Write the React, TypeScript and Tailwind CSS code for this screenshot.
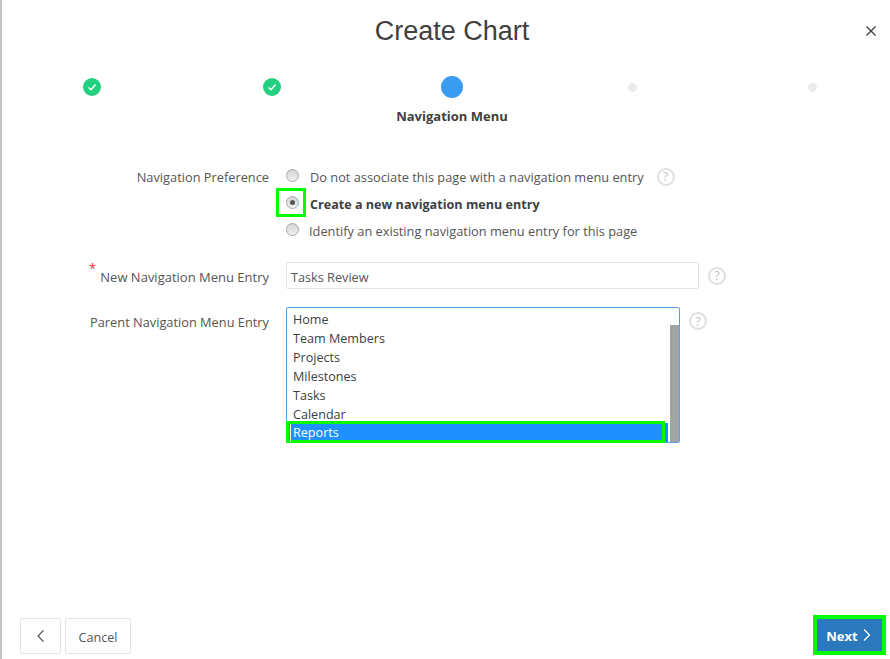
import React from "react";

const sans = "font-['Open_Sans','Noto_Sans',sans-serif]";

function Help({ className = "" }: { className?: string }) {
  return (
    <span className={"flex h-[18px] w-[18px] shrink-0 items-center justify-center rounded-full border-2 border-[#e0e0e0] text-[13px] leading-none text-[#c8c8c8] " + className}>?</span>
  );
}

function Radio({ checked = false }: { checked?: boolean }) {
  return (
    <span className="flex h-[13px] w-[13px] shrink-0 items-center justify-center rounded-full border border-[#a9a9a9] bg-gradient-to-b from-[#d4d4d4] to-[#f0f0f0]">
      {checked && <span className="h-[5px] w-[5px] rounded-full bg-[#555]" />}
    </span>
  );
}

function Done() {
  return (
    <span className="flex h-[18px] w-[18px] items-center justify-center rounded-full bg-[#22d07f]">
      <svg width="12" height="12" viewBox="0 0 12 12" fill="none" stroke="white" strokeWidth="1.5"><path d="M2.5 6.5 5 8.7 9.6 3.4" /></svg>
    </span>
  );
}

const items = ["Home", "Team Members", "Projects", "Milestones", "Tasks", "Calendar"];

export default function App() {
  return (
    <div className={"relative flex h-[659px] w-[890px] flex-col overflow-hidden border-l-2 border-[#c4c4c4] bg-white text-[#404040] " + sans}>
      <button className="absolute right-[12px] top-[24px] text-[#404040]">
        <svg width="14" height="14" viewBox="0 0 14 14" fill="none" stroke="currentColor" strokeWidth="1.4"><path d="M2.5 2.5l9 9M11.5 2.5l-9 9" /></svg>
      </button>

      <div className="w-[900px] shrink-0">
        <h1 className="pt-[15px] text-center font-['Liberation_Sans',sans-serif] text-[27px] leading-[32px] text-[#404040]">Create Chart</h1>
        <div className="mt-[29px] grid grid-cols-5">
          <div className="flex h-[22px] items-center justify-center"><Done /></div>
          <div className="flex h-[22px] items-center justify-center"><Done /></div>
          <div className="flex h-[22px] items-center justify-center"><span className="h-[22px] w-[22px] rounded-full bg-[#3a9bf0]" /></div>
          <div className="flex h-[22px] items-center justify-center"><span className="h-[9px] w-[9px] rounded-full bg-[#ececec]" /></div>
          <div className="flex h-[22px] items-center justify-center"><span className="h-[9px] w-[9px] rounded-full bg-[#ececec]" /></div>
        </div>
        <div className="mt-[9px] text-center text-[13px] font-bold leading-[18px]">Navigation Menu</div>
      </div>

      <div className="mt-[38px] flex-1 text-[12.8px]">
        <div className="flex">
          <div className="w-[267px] pr-0 pt-[5px] text-right leading-[18px] text-[#555]">Navigation Preference</div>
          <div className="ml-[17px] flex flex-col">
            <div className="flex h-[27px] items-center">
              <span className="-mt-[3px]"><Radio /></span>
              <span className="ml-[11px] leading-[18px] text-[#555]">Do not associate this page with a navigation menu entry</span>
              <Help className="ml-[13px]" />
            </div>
            <div className="flex h-[27px] items-center">
              <span className="relative -mt-[3px] flex">
                <span className="absolute -left-[10px] -top-[8px] h-[29px] w-[30px] border-[3px] border-[#00ff00]" />
                <Radio checked />
              </span>
              <span className="ml-[11px] pt-[2px] text-[12.6px] font-bold leading-[18px]">Create a new navigation menu entry</span>
            </div>
            <div className="flex h-[27px] items-center">
              <span className="-mt-[3px]"><Radio /></span>
              <span className="ml-[10px] leading-[18px] text-[#555]">Identify an existing navigation menu entry for this page</span>
            </div>
          </div>
        </div>

        <div className="mt-[18px] flex items-center">
          <div className="relative w-[267px] pt-[3px] text-right text-[13px] leading-[18px] text-[#555]">
            <span className="absolute left-[87px] -top-[6px] text-[13px] text-[#ff2020]">*</span>
            New Navigation Menu Entry
          </div>
          <div className="ml-[17px] flex h-[27px] w-[413px] items-center rounded-[2px] border border-[#e4e4e4] px-[4px] pt-[5px] text-[12.7px] text-[#555]">Tasks Review</div>
          <Help className="ml-[9px]" />
        </div>

        <div className="mt-[18px] flex items-start">
          <div className="w-[267px] pt-[6px] text-right leading-[18px] text-[#555]">Parent Navigation Menu Entry</div>
          <div className="relative ml-[17px] flex h-[136px] w-[394px] rounded-[2px] border border-[#5a9fe0] bg-white text-[12.6px]">
            <div className="relative flex-1 pl-[6px] pt-[1.5px]">
              {items.map((t) => (
                <div key={t} className="h-[19.2px] leading-[19px] text-[#404040]">{t}</div>
              ))}
              <div className="absolute bottom-0 left-0 right-[2px] h-[19px] bg-[#1e90ff]" />
            </div>
            <div className="mt-[17px] w-[9px] bg-[#a3a3a3]" />
            <div className="absolute bottom-[-1px] left-[-1px] flex h-[22px] w-[379px] items-center border-[3px] border-[#00ff00] bg-[#1e90ff] pl-[1px] pt-[2px] leading-[18px] text-white">
              <span className="border-l border-white pl-[2px]">Reports</span>
            </div>
          </div>
          <Help className="ml-[9px] mt-[5px]" />
        </div>
      </div>

      <div className="flex h-[48px] shrink-0 items-start justify-between pl-[18px] pr-[4px] text-[13px]">
        <div className="flex gap-[4px] pt-[7px]">
          <button className="flex h-[36px] w-[41px] items-center justify-center rounded-[2px] border border-[#e2e2e2] bg-white text-[#555]">
            <svg width="14" height="14" viewBox="0 0 14 14" fill="none" stroke="currentColor" strokeWidth="1.2"><path d="M9.5 1.5 4 7l5.500 5.500" /></svg>
          </button>
          <button className="h-[36px] w-[66px] rounded-[2px] border border-[#e2e2e2] bg-white pt-[5px] text-[12.6px] text-[#555]">Cancel</button>
        </div>
        <div className="pt-[4px]">
          <button className="flex h-[40px] w-[73px] items-center justify-center gap-[3px] border-[4px] border-[#00ff00] bg-[#2b78bd] text-[13px] font-bold text-white">
            <span className="pt-[3px]">Next</span>
            <svg width="12" height="14" viewBox="0 0 12 14" fill="none" stroke="currentColor" strokeWidth="1.3"><path d="M3 1.500 8.500 7 3 12.500" /></svg>
          </button>
        </div>
      </div>
    </div>
  );
}
